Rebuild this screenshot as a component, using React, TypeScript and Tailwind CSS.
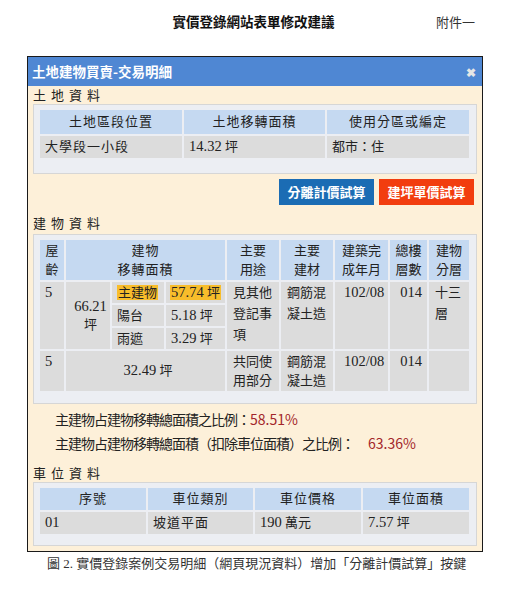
import type React from "react";

const SERIF = { fontFamily: "'Liberation Serif', 'Noto Sans CJK TC', serif" };
const SANS = { fontFamily: "'Noto Sans CJK TC', 'Liberation Sans', sans-serif" };

const TH = "bg-[#c5d9f1] text-center font-normal align-middle p-0";
const TD = "bg-[#dcdcdc] p-0 pl-[5px]";
const TOP = `${TD} align-top`;
const MID = `${TD} align-middle`;

// digits in the reference look larger than the CJK glyphs
const Num: React.FC<{ children: React.ReactNode }> = ({ children }) => (
	<span className="text-[14.5px]">{children}</span>
);

const SectionLabel: React.FC<{ text: string; className?: string }> = ({
	text,
	className = "",
}) => (
	<div
		className={`pl-[5px] text-[13px] leading-[18px] tracking-[5px] text-[#222] ${className}`}
		style={SERIF}
	>
		{text}
	</div>
);

const Panel: React.FC<{ children: React.ReactNode; className?: string }> = ({
	children,
	className = "",
}) => (
	<div
		className={`mx-[5px] border border-[#d6d6d6] bg-[#eceef3] pl-[4px] pr-[5px] pt-[3px] ${className}`}
	>
		{children}
	</div>
);

export default function App() {
	return (
		<div className="w-[507px] h-[600px] bg-white text-[#222]" style={SERIF}>
			{/* page title */}
			<div className="grid grid-cols-[1fr_auto_1fr] items-start pt-[13px] h-[56px]">
				<div />
				<div className="text-[13.5px] font-bold leading-[20px] text-[#111]">
					實價登錄網站表單修改建議
				</div>
				<div className="flex justify-end pr-[32px] text-[13px] leading-[20px] text-[#333]">
					附件一
				</div>
			</div>

			{/* dialog */}
			<div className="ml-[27px] w-[456px] border border-[#1a1a1a] bg-[#fdf0d9]">
				<div
					className="flex h-[29px] items-center justify-between bg-[#4f87d3] pl-[4px] pr-[6px]"
					style={SANS}
				>
					<span className="text-[13.5px] font-bold text-white">
						土地建物買賣-交易明細
					</span>
					<span className="text-[12px] font-bold text-[#e6e6e6]">✖</span>
				</div>

				<SectionLabel text="土地資料" className="pt-[1px]" />
				<Panel className="mt-[-1px] pb-[13px]">
					<table className="w-[433px] table-fixed border-separate border-spacing-[2px] text-[13px]">
						<colgroup>
							<col className="w-[142px]" />
							<col className="w-[141px]" />
							<col className="w-[142px]" />
						</colgroup>
						<tbody>
							<tr>
								<th className={`${TH} h-[24px] tracking-[1px]`}>土地區段位置</th>
								<th className={`${TH} h-[24px] tracking-[1px]`}>土地移轉面積</th>
								<th className={`${TH} h-[24px] tracking-[1px]`}>使用分區或編定</th>
							</tr>
							<tr>
								<td className={`${MID} h-[20px] tracking-[1px]`}>大學段一小段</td>
								<td className={`${MID} h-[20px]`}>
									<Num>14.32</Num> 坪
								</td>
								<td className={`${MID} h-[20px]`}>都市：住</td>
							</tr>
						</tbody>
					</table>
				</Panel>

				<div className="flex justify-end gap-[5px] pr-[8px] pt-[5px]" style={SANS}>
					<button className="h-[26px] w-[95px] bg-[#1b6cb4] text-[13px] font-bold text-white">
						分離計價試算
					</button>
					<button className="h-[26px] w-[95px] bg-[#f23d0f] text-[13px] font-bold text-white">
						建坪單價試算
					</button>
				</div>

				<SectionLabel text="建物資料" className="pt-[10px]" />
				<Panel className="mt-[1px] pb-[10px]">
					<table className="w-[433px] table-fixed border-separate border-spacing-[2px] text-[13px] leading-[21px]">
						<colgroup>
							<col className="w-[24px]" />
							<col className="w-[44px]" />
							<col className="w-[52px]" />
							<col className="w-[59px]" />
							<col className="w-[52px]" />
							<col className="w-[52px]" />
							<col className="w-[53px]" />
							<col className="w-[37px]" />
							<col className="w-[40px]" />
						</colgroup>
						<tbody>
							<tr className="leading-[19px]">
								<th className={`${TH} h-[40px]`}>
									屋
									<br />
									齡
								</th>
								<th className={`${TH} h-[40px] tracking-[1px]`} colSpan={3}>
									建物
									<br />
									移轉面積
								</th>
								<th className={`${TH} h-[40px]`}>
									主要
									<br />
									用途
								</th>
								<th className={`${TH} h-[40px]`}>
									主要
									<br />
									建材
								</th>
								<th className={`${TH} h-[40px]`}>
									建築完
									<br />
									成年月
								</th>
								<th className={`${TH} h-[40px]`}>
									總樓
									<br />
									層數
								</th>
								<th className={`${TH} h-[40px]`}>
									建物
									<br />
									分層
								</th>
							</tr>
							<tr>
								<td className={TOP} rowSpan={3}>
									<Num>5</Num>
								</td>
								<td className={`${MID} pl-0 text-center leading-[18px]`} rowSpan={3}>
									<Num>66.21</Num>
									<br />坪
								</td>
								<td className={`${TOP} h-[21px]`}>
									<span className="bg-[#f8bd2b] px-[1px]">主建物</span>
								</td>
								<td className={`${TOP} h-[21px]`}>
									<span className="bg-[#f8bd2b] px-[1px] -ml-[1px]">
										<Num>57.74</Num> 坪
									</span>
								</td>
								<td className={`${TOP} pl-[6px]`} rowSpan={3}>
									見其他登記事項
								</td>
								<td className={`${TOP} pl-[6px]`} rowSpan={3}>
									鋼筋混凝土造
								</td>
								<td className={`${TOP} pl-0 text-center`} rowSpan={3}>
									<Num>102/08</Num>
								</td>
								<td className={`${TOP} pl-0 text-center`} rowSpan={3}>
									<Num>014</Num>
								</td>
								<td className={`${TOP} pl-[6px]`} rowSpan={3}>
									十三層
								</td>
							</tr>
							<tr>
								<td className={`${TOP} h-[21px]`}>陽台</td>
								<td className={`${TOP} h-[21px]`}>
									<Num>5.18</Num> 坪
								</td>
							</tr>
							<tr>
								<td className={`${TOP} h-[20px]`}>雨遮</td>
								<td className={`${TOP} h-[20px]`}>
									<Num>3.29</Num> 坪
								</td>
							</tr>
							<tr className="leading-[19px]">
								<td className={`${TOP} h-[40px] pt-[1px]`}>
									<Num>5</Num>
								</td>
								<td className={`${MID} h-[40px] pl-0 text-center`} colSpan={3}>
									<Num>32.49</Num> 坪
								</td>
								<td className={`${TOP} h-[40px] pl-[6px] pt-[1px]`}>共同使用部分</td>
								<td className={`${TOP} h-[40px] pl-[6px] pt-[1px]`}>鋼筋混凝土造</td>
								<td className={`${TOP} h-[40px] pl-0 pt-[1px] text-center`}>
									<Num>102/08</Num>
								</td>
								<td className={`${TOP} h-[40px] pl-0 pt-[1px] text-center`}>
									<Num>014</Num>
								</td>
								<td className={`${TOP} h-[40px]`} />
							</tr>
						</tbody>
					</table>
				</Panel>

				<div className="pl-[27px] pt-[3px] text-[14px] leading-[24px] tracking-[-1px]" style={SANS}>
					<div>
						主建物占建物移轉總面積之比例：
						<span className="tracking-normal text-[#a3262a]">58.51%</span>
					</div>
					<div>
						主建物占建物移轉總面積（扣除車位面積）之比例：
						<span className="ml-[14px] tracking-normal text-[#a3262a]">63.36%</span>
					</div>
				</div>

				<SectionLabel text="車位資料" className="pt-[10px]" />
				<Panel className="mt-[-1px] pb-[9px] mb-[5px]">
					<table className="w-[433px] table-fixed border-separate border-spacing-[2px] text-[13px]">
						<colgroup>
							<col className="w-[106px]" />
							<col className="w-[105px]" />
							<col className="w-[106px]" />
							<col className="w-[106px]" />
						</colgroup>
						<tbody>
							<tr>
								<th className={`${TH} h-[22px] tracking-[1px]`}>序號</th>
								<th className={`${TH} h-[22px] tracking-[1px]`}>車位類別</th>
								<th className={`${TH} h-[22px] tracking-[1px]`}>車位價格</th>
								<th className={`${TH} h-[22px] tracking-[1px]`}>車位面積</th>
							</tr>
							<tr>
								<td className={`${MID} h-[20px]`}>
									<Num>01</Num>
								</td>
								<td className={`${MID} h-[20px] tracking-[1px]`}>坡道平面</td>
								<td className={`${MID} h-[20px]`}>
									<Num>190</Num> 萬元
								</td>
								<td className={`${MID} h-[20px]`}>
									<Num>7.57</Num> 坪
								</td>
							</tr>
						</tbody>
					</table>
				</Panel>
			</div>

			<div className="pt-[2px] pl-[47px] text-[13px] leading-[20px] text-[#333]">
				圖 2. 實價登錄案例交易明細（網頁現況資料）增加「分離計價試算」按鍵
			</div>
		</div>
	);
}
